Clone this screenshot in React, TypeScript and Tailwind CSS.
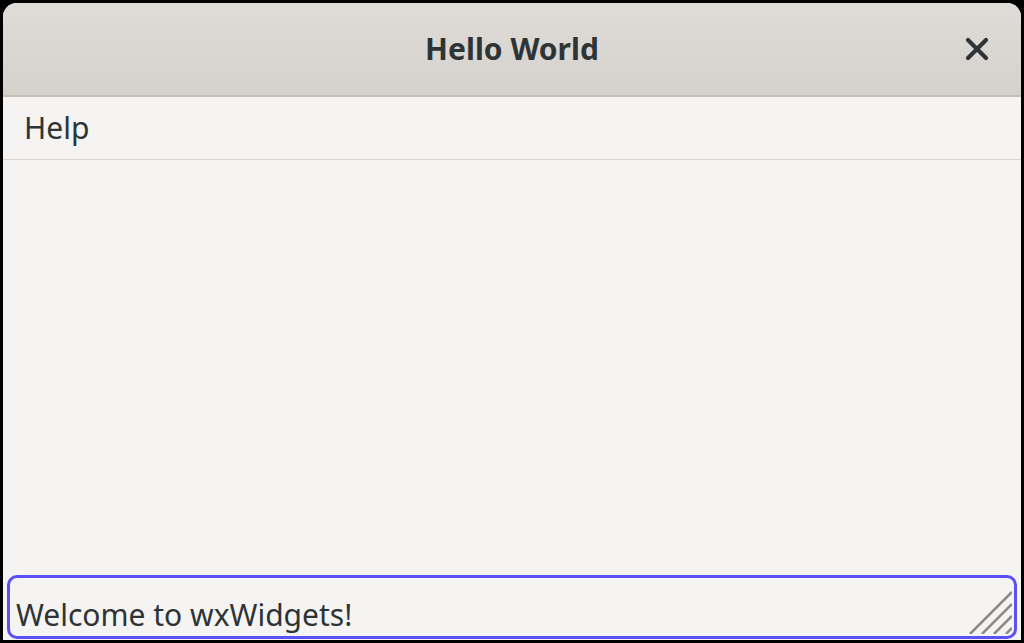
export default function App() {
  return (
    <div className="w-[1024px] h-[643px] bg-black p-[3px] overflow-hidden" style={{ fontFamily: '"Noto Sans", sans-serif' }}>
      <div className="w-full h-full flex flex-col bg-[#f5f4f2] rounded-t-[14px] overflow-hidden">
        {/* title bar */}
        <div className="h-[94px] shrink-0 flex items-center justify-center relative bg-gradient-to-b from-[#dfdbd7] to-[#d5d1cc] border-b-2 border-[#c4bdb6]">
          <span className="text-[30px] font-bold text-[#2e3436] leading-none">Hello World</span>
          <button className="absolute right-[31px] top-[33px] w-[26px] h-[26px] flex items-center justify-center">
            <svg width="24" height="24" viewBox="0 0 24 24">
              <path d="M3 3 L21 21 M21 3 L3 21" stroke="#2e3436" strokeWidth="4.2" strokeLinecap="round" />
            </svg>
          </button>
        </div>
        {/* menu bar */}
        <div className="h-[63px] shrink-0 flex items-center px-[21px] border-b border-[#d8d4d0]">
          <span className="text-[30px] text-[#2e3436] leading-none">Help</span>
        </div>
        {/* content */}
        <div className="flex-1" />
        {/* status / text field */}
        <div className="px-[4px]">
          <div className="relative h-[64px] border-[3px] border-[#5d4ff6] rounded-[10px] flex items-end pl-[6px] pb-[6px]">
            <span className="text-[30px] text-[#2e3436] leading-none">Welcome to wxWidgets!</span>
            <svg className="absolute right-[2px] bottom-[2px]" width="44" height="44" viewBox="0 0 44 44">
              <path d="M2 44 L44 2 M14 44 L44 14 M26 44 L44 26 M38 44 L44 38" stroke="#8d8985" strokeWidth="2.5" />
            </svg>
          </div>
        </div>
        <div className="h-[1px] shrink-0" />
      </div>
    </div>
  );
}
